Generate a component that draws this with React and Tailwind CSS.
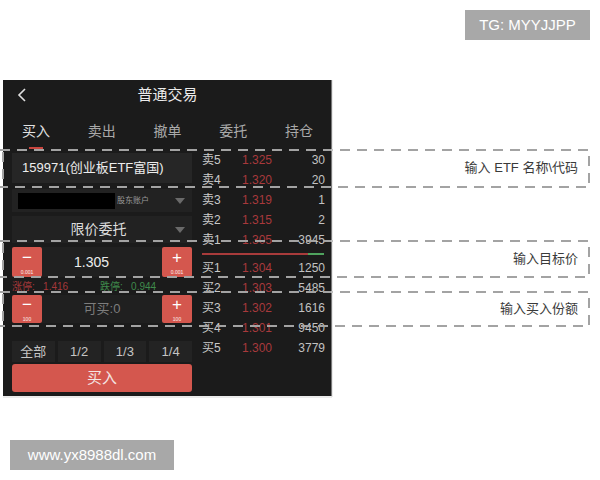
import React from "react";

const sellRows = [
  ["卖5", "1.325", "30"],
  ["卖4", "1.320", "20"],
  ["卖3", "1.319", "1"],
  ["卖2", "1.315", "2"],
  ["卖1", "1.305", "3945"],
];
const buyRows = [
  ["买1", "1.304", "1250"],
  ["买2", "1.303", "5485"],
  ["买3", "1.302", "1616"],
  ["买4", "1.301", "9450"],
  ["买5", "1.300", "3779"],
];

const StepButton = ({ sign, step }) => (
  <div className="w-[30px] h-full bg-[#d4574e] rounded-[2px] flex flex-col items-center justify-center leading-none">
    <span className="text-[17px] text-white font-light leading-none">{sign}</span>
    <span className="text-[5px] text-white/90 mt-[4px]">{step}</span>
  </div>
);

const Caret = () => (
  <svg width="10" height="6" viewBox="0 0 10 6">
    <path d="M0 0 L10 0 L5 6 Z" fill="#6a6a6a" />
  </svg>
);

const BookRow = ([label, price, vol]) => (
  <div key={label} className="h-[20px] flex items-center text-[12px]">
    <span className="w-[40px] text-[#c9c9c9]">{label}</span>
    <span className="w-[50px] text-[#a8393b]">{price}</span>
    <span className="flex-1 text-right text-[#c2c2c2] pr-[7px]">{vol}</span>
  </div>
);

export default function App() {
  return (
    <div
      className="relative w-[600px] h-[480px] bg-white overflow-hidden"
      style={{ fontFamily: "'Liberation Sans', 'Noto Sans CJK SC', sans-serif" }}
    >
      {/* phone screenshot */}
      <div className="ml-[3px] pt-[80px]">
        <div className="w-[329px] h-[316px] bg-[#1b1b1b] flex flex-col">
          <div className="h-[30px] relative flex items-center justify-center">
            <svg className="absolute left-[14px] top-[8px]" width="10" height="14" viewBox="0 0 10 14">
              <path d="M8 1 L2 7 L8 13" fill="none" stroke="#e0e0e0" strokeWidth="1.6" />
            </svg>
            <span className="text-[15px] text-[#ececec]">普通交易</span>
          </div>
          <div className="h-[42px] grid grid-cols-5 pt-[11px]">
            {["买入", "卖出", "撤单", "委托", "持仓"].map((t, i) => (
              <div key={t} className="flex flex-col items-center">
                <span className={`text-[14px] ${i === 0 ? "text-[#e2e2e2]" : "text-[#a9a9a9]"}`}>{t}</span>
                {i === 0 && <div className="w-[14px] h-[2px] bg-[#c9453e] mt-[5px]" />}
              </div>
            ))}
          </div>
          <div className="flex flex-1">
            {/* left form */}
            <div className="w-[180px] ml-[9px] flex flex-col pt-[1px]">
              <div className="h-[30px] bg-[#262626] flex items-center pl-[10px] text-[13px] text-[#ededed]">
                159971(创业板ETF富国)
              </div>
              <div className="h-[23px] mt-[6px] bg-[#222222] flex items-center pl-[6px] pr-[7px]">
                <div className="w-[97px] h-[16px] bg-black" />
                <span className="text-[8px] text-[#9a9a9a] ml-[2px] flex-1">股东账户</span>
                <Caret />
              </div>
              <div className="h-[27px] mt-[4px] bg-[#222222] flex items-center pr-[7px]">
                <span className="flex-1 text-center text-[14px] text-[#dcdcdc] pl-[10px]">限价委托</span>
                <Caret />
              </div>
              <div className="h-[30px] mt-[4px] flex items-stretch">
                <StepButton sign="−" step="0.001" />
                <div className="flex-1 bg-[#202020] flex items-center pl-[32px] text-[14px] text-[#ececec]">1.305</div>
                <StepButton sign="+" step="0.001" />
              </div>
              <div className="h-[18px] flex items-center text-[10px]">
                <span className="text-[#a3383a] w-[88px]">涨停:&nbsp;&nbsp;&nbsp;1.416</span>
                <span className="text-[#3f8a4c]">跌停:&nbsp;&nbsp;&nbsp;0.944</span>
              </div>
              <div className="h-[28px] flex items-stretch">
                <StepButton sign="−" step="100" />
                <div className="flex-1 bg-[#202020] flex items-center justify-center text-[13px] text-[#7d7d7d]">可买:0</div>
                <StepButton sign="+" step="100" />
              </div>
              <div className="h-[21px] mt-[18px] grid grid-cols-4 gap-[3px] text-[13px] text-[#c5c5c5]">
                {["全部", "1/2", "1/3", "1/4"].map((t) => (
                  <div key={t} className="bg-[#232323] flex items-center justify-center">{t}</div>
                ))}
              </div>
              <div className="h-[28px] mt-[2px] bg-[#d4574e] rounded-[3px] flex items-center justify-center text-[15px] text-[#f3e4e2]">
                买入
              </div>
            </div>
            {/* order book */}
            <div className="flex-1 ml-[10px] flex flex-col -mt-[2px]">
              {sellRows.map(BookRow)}
              <div className="h-[8px] flex items-center pr-[8px]">
                <div className="h-[2px] flex-1 bg-[#a83b3b]" />
                <div className="h-[2px] w-[16px] bg-[#4fa35e]" />
              </div>
              {buyRows.map(BookRow)}
            </div>
          </div>
        </div>
      </div>

      {/* annotation boxes */}
      <svg className="absolute left-0 top-0" width="600" height="480" viewBox="0 0 600 480">
        <g fill="none" stroke="#a3a3a3" strokeWidth="2" strokeDasharray="10 7">
          <path d="M0 150 H589 V187 H0" />
          <path d="M3 152 V186" />
          <path d="M0 241 H589 V277 H0" />
          <path d="M3 243 V276" />
          <path d="M0 292 H589 V326 H0" />
          <path d="M3 294 V325" />
        </g>
        <path d="M332 80 V397 H3" fill="none" stroke="#d8d8d8" strokeWidth="1" />
      </svg>
      <div className="absolute right-[22px] top-[158px] text-[13px] text-[#3a3a3a]">输入 ETF 名称\代码</div>
      <div className="absolute right-[22px] top-[249px] text-[13px] text-[#3a3a3a]">输入目标价</div>
      <div className="absolute right-[22px] top-[299px] text-[13px] text-[#3a3a3a]">输入买入份额</div>

      {/* watermarks */}
      <div className="absolute left-[465px] top-[10px] w-[125px] h-[30px] bg-[#a8a8a8] flex items-center justify-center text-[15px] text-white">
        TG: MYYJJPP
      </div>
      <div className="absolute left-[10px] top-[440px] w-[164px] h-[30px] bg-[#a8a8a8] flex items-center justify-center text-[15px] text-white">
        www.yx8988dl.com
      </div>
    </div>
  );
}
